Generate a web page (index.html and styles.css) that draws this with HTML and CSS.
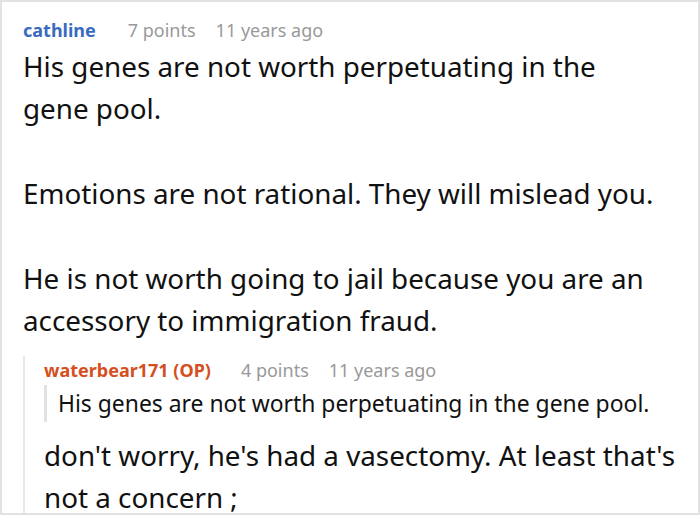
FILE: index.html
```html
<!DOCTYPE html>
<html>
<head>
<meta charset="utf-8">
<link rel="stylesheet" href="styles.css">
</head>
<body>
<div class="frame">
  <div class="comment">
    <div class="meta">
      <span class="author">cathline</span>
      <span class="score">7 points</span>
      <span class="time">11 years ago</span>
    </div>
    <div class="body">
      <p>His genes are not worth perpetuating in the gene pool.</p>
      <p>Emotions are not rational. They will mislead you.</p>
      <p>He is not worth going to jail because you are an accessory to immigration fraud.</p>
    </div>
    <div class="child">
      <div class="meta small">
        <span class="author op">waterbear171 (OP)</span>
        <span class="score">4 points</span>
        <span class="time">11 years ago</span>
      </div>
      <blockquote class="quote">His genes are not worth perpetuating in the gene pool.</blockquote>
      <div class="body reply">
        <p>don't worry, he's had a vasectomy. At least that's not a concern ;</p>
      </div>
    </div>
  </div>
</div>
</body>
</html>
```
FILE: styles.css
```css
html, body {
  margin: 0;
  padding: 0;
  background: #fff;
}
.frame {
  width: 700px;
  height: 515px;
  box-sizing: border-box;
  border: 2px solid #e2e2e2;
  overflow: hidden;
  font-family: "Noto Sans", "DejaVu Sans", sans-serif;
  color: #111;
}
.comment {
  padding: 14px 0 0 21px;
}
.meta {
  display: flex;
  align-items: baseline;
  font-size: 18px;
  line-height: 28px;
  color: #999;
}
.author {
  font-weight: bold;
  color: #3a6bbf;
  margin-right: 32px;
}
.score {
  margin-right: 20px;
}
.body {
  font-size: 27.8px;
  line-height: 42.4px;
  width: 640px;
  margin-top: 1px;
}
.body p {
  margin: 0 0 42.4px;
}
.body p:last-child {
  margin-bottom: 0;
}
.child {
  margin: 14px 0 0 0;
  border-left: 2px solid #e8e8e8;
  padding-left: 19px;
}
.author.op {
  color: #d5501f;
  margin-right: 30px;
}
.quote {
  margin: 1px 0 0;
  border-left: 3px solid #e2e2e2;
  padding-left: 11px;
  font-size: 22.9px;
  line-height: 37px;
}
.reply {
  margin-top: 12px;
  width: 648px;
}
```
